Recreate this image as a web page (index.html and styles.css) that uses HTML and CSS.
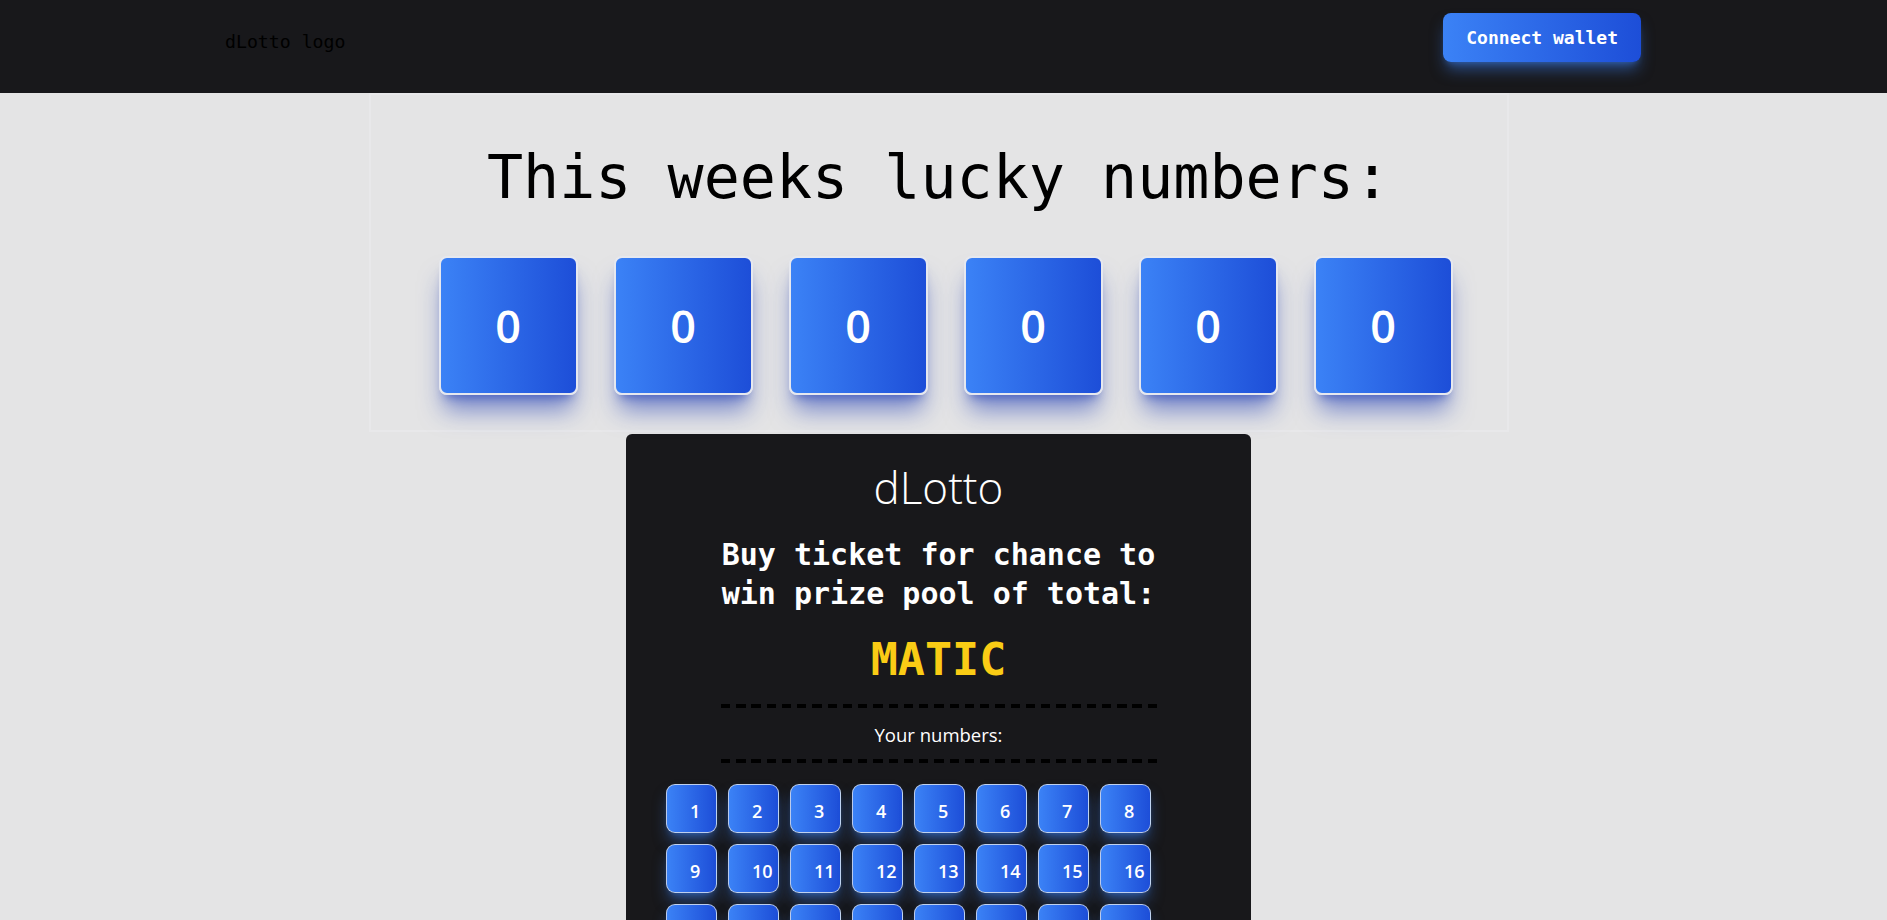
FILE: index.html
```html
<!DOCTYPE html>
<html lang="en">
<head>
<meta charset="utf-8">
<title>dLotto</title>
<link rel="stylesheet" href="styles.css">
</head>
<body>
<header class="topbar">
  <div class="logo">dLotto logo</div>
  <button class="connect">Connect wallet</button>
</header>
<main class="page">
  <section class="draw">
    <h1 class="draw-title">This weeks lucky numbers:</h1>
    <div class="draw-balls">
      <div class="ball">0</div>
      <div class="ball">0</div>
      <div class="ball">0</div>
      <div class="ball">0</div>
      <div class="ball">0</div>
      <div class="ball">0</div>
    </div>
  </section>
  <section class="ticket">
    <h2 class="ticket-brand">dLotto</h2>
    <p class="ticket-pitch">Buy ticket for chance to<br>win prize pool of total:</p>
    <p class="ticket-prize">MATIC</p>
    <div class="ticket-rule"></div>
    <p class="ticket-label">Your numbers:</p>
    <div class="ticket-rule ticket-rule-bottom"></div>
    <div class="pick-grid">
      <button class="pick">1</button><button class="pick">2</button><button class="pick">3</button><button class="pick">4</button>
      <button class="pick">5</button><button class="pick">6</button><button class="pick">7</button><button class="pick">8</button>
      <button class="pick">9</button><button class="pick">10</button><button class="pick">11</button><button class="pick">12</button>
      <button class="pick">13</button><button class="pick">14</button><button class="pick">15</button><button class="pick">16</button>
      <button class="pick">17</button><button class="pick">18</button><button class="pick">19</button><button class="pick">20</button>
      <button class="pick">21</button><button class="pick">22</button><button class="pick">23</button><button class="pick">24</button>
      <button class="pick">25</button><button class="pick">26</button><button class="pick">27</button><button class="pick">28</button>
      <button class="pick">29</button><button class="pick">30</button><button class="pick">31</button><button class="pick">32</button>
      <button class="pick">33</button><button class="pick">34</button><button class="pick">35</button><button class="pick">36</button>
      <button class="pick">37</button><button class="pick">38</button><button class="pick">39</button><button class="pick">40</button>
      <button class="pick">41</button><button class="pick">42</button><button class="pick">43</button><button class="pick">44</button>
      <button class="pick">45</button><button class="pick">46</button><button class="pick">47</button><button class="pick">48</button>
    </div>
  </section>
</main>
</body>
</html>
```
FILE: styles.css
```css
* {
  box-sizing: border-box;
}

html,
body {
  margin: 0;
}

body {
  background: #e4e4e5;
  font-family: "Open Sans", "Noto Sans", sans-serif;
}

/* ---------- header ---------- */
.topbar {
  height: 93px;
  background: #18181b;
  display: flex;
  justify-content: space-between;
  align-items: flex-start;
  padding: 13px 246px 0 225px;
}

.logo {
  margin-top: 15px;
  font-family: "DejaVu Sans Mono", monospace;
  font-size: 18.2px;
  line-height: 28px;
  color: #000;
}

.connect {
  font-family: "DejaVu Sans Mono", monospace;
  font-weight: 700;
  font-size: 18px;
  line-height: 25px;
  color: #fff;
  padding: 12px 23px;
  border: 0;
  border-radius: 8px;
  background: linear-gradient(to right, #3b82f6, #1d4ed8);
  box-shadow: 0 10px 15px -3px rgba(59, 130, 246, 0.5),
    0 4px 6px -4px rgba(59, 130, 246, 0.5);
}

/* ---------- page ---------- */
.page {
  padding-right: 10px;
  padding-bottom: 40px;
}

.draw {
  width: 1140px;
  margin: 0 auto;
  border: 2px solid #e8e8ea;
  padding: 52px 0 35px;
  text-align: center;
}

.draw-title {
  margin: 0;
  font-family: "DejaVu Sans Mono", monospace;
  font-weight: 400;
  font-size: 60px;
  line-height: 60px;
  color: #000;
}

.draw-balls {
  margin-top: 49px;
  padding-left: 14px;
  display: flex;
  justify-content: center;
  gap: 36px;
}

.ball {
  width: 139px;
  height: 139px;
  border: 2px solid #e6e8ef;
  border-radius: 8px;
  background: linear-gradient(to right, #3b82f6, #1d4ed8);
  box-shadow: 0 20px 25px -5px rgba(30, 58, 180, 0.55),
    0 8px 10px -6px rgba(30, 58, 180, 0.55);
  display: flex;
  align-items: center;
  justify-content: center;
  color: #fff;
  font-weight: 600;
  font-size: 45px;
  line-height: 1;
}

/* ---------- ticket ---------- */
.ticket {
  width: 625px;
  margin: 2px auto 0;
  background: #18181b;
  border-radius: 6px;
  padding: 28px 40px 40px;
  text-align: center;
  color: #fff;
}

.ticket-brand {
  margin: 0;
  font-weight: 300;
  font-size: 44px;
  line-height: 50px;
}

.ticket-pitch {
  margin: 23px 0 0;
  font-family: "DejaVu Sans Mono", monospace;
  font-weight: 700;
  font-size: 30px;
  line-height: 39px;
}

.ticket-prize {
  margin: 20px 0 0;
  font-family: "DejaVu Sans Mono", monospace;
  font-weight: 700;
  font-size: 45px;
  line-height: 54px;
  color: #facc15;
}

.ticket-rule {
  width: 436px;
  height: 4px;
  margin: 17px auto 0;
  background: repeating-linear-gradient(to right, #000 0 9.3px, transparent 9.3px 15.24px);
}

.ticket-rule-bottom {
  margin-top: 12px;
}

.ticket-label {
  margin: 15px 0 0;
  font-size: 18.5px;
  line-height: 24px;
}

.pick-grid {
  margin-top: 21px;
  display: grid;
  grid-template-columns: repeat(8, 51px);
  grid-auto-rows: 49px;
  gap: 11px;
}

.pick {
  display: flex;
  align-items: center;
  padding: 5px 0 0 23px;
  border: 1px solid rgba(226, 232, 240, 0.8);
  border-radius: 9px;
  background: linear-gradient(to right, #3b82f6, #1d4ed8);
  box-shadow: 0 10px 15px -3px rgba(59, 130, 246, 0.5),
    0 4px 6px -4px rgba(59, 130, 246, 0.5);
  color: #fff;
  font-family: "Open Sans", "Noto Sans", sans-serif;
  font-weight: 600;
  font-size: 18px;
  line-height: 24px;
}
```
